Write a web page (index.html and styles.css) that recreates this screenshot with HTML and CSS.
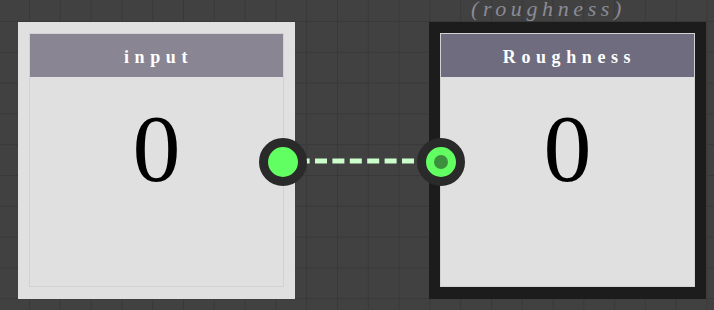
FILE: index.html
```html
<!DOCTYPE html>
<html lang="en">
<head>
  <meta charset="UTF-8">
  <meta name="viewport" content="width=device-width, initial-scale=1.0">
  <title>Node graph</title>
  <link rel="stylesheet" href="styles.css">
</head>
<body>

<div class="canvas">
  <!-- wire between the two ports -->
  <svg class="wire" width="714" height="310" viewBox="0 0 714 310">
    <line x1="280.2" y1="161" x2="440" y2="161"></line>
  </svg>

  <div class="node node-input">
    <div class="node-body">
      <div class="node-title">input</div>
      <div class="node-value">0</div>
      <span class="port port-out"></span>
    </div>
  </div>

  <div class="var-label">(roughness)</div>

  <div class="node node-selected">
    <div class="node-body">
      <div class="node-title title-dark">Roughness</div>
      <div class="node-value">0</div>
      <span class="port port-in"></span>
    </div>
  </div>
</div>

</body>
</html>
```

FILE: styles.css
```css
* {
  margin: 0;
  padding: 0;
  box-sizing: border-box;
}

body {
  background: #414141;
  overflow: hidden;
  width: 714px;
  height: 310px;
  font-family: 'Liberation Serif', 'Times New Roman', serif;
}

.canvas {
  position: relative;
  width: 714px;
  height: 310px;
  background-color: #414141;
  background-image:
    linear-gradient(to right, #393939 1px, transparent 1px),
    linear-gradient(to bottom, #393939 1px, transparent 1px);
  background-size: 30.8px 30.8px;
  background-position: 29px 21px;
}

.wire {
  position: absolute;
  top: 0;
  left: 0;
}

.wire line {
  stroke: #ccffcc;
  stroke-width: 5;
  stroke-dasharray: 12 5.4;
}

.node {
  position: absolute;
  top: 22px;
  width: 277px;
  height: 277px;
  padding: 11px 11px 12px;
  background: #e0e0e0;
}

.node-input {
  left: 18px;
}

.node-selected {
  left: 429px;
  background: #1c1c1c;
}

.node-body {
  position: relative;
  height: 100%;
  background: #e0e0e0;
  border: 1px solid #d2d2d2;
  display: flex;
  flex-direction: column;
}

.node-title {
  height: 43px;
  display: flex;
  align-items: center;
  justify-content: center;
  padding: 3px 0 0 4px;
  background: #898592;
  color: #fff;
  font-size: 18px;
  font-weight: bold;
  letter-spacing: 5.6px;
}

.title-dark {
  background: #6e6c7e;
}

.node-value {
  padding-top: 24px;
  text-align: center;
  font-size: 96px;
  line-height: 1;
  color: #000;
}

.port {
  position: absolute;
  top: 104px;
  width: 48px;
  height: 48px;
  border-radius: 50%;
  border: 9px solid #2a2a2a;
  background: #62ff62;
  z-index: 2;
}

.port-out {
  right: -24px;
}

.port-in {
  left: -24px;
}

.port-in::after {
  content: '';
  position: absolute;
  top: 8px;
  left: 8px;
  width: 14px;
  height: 14px;
  border-radius: 50%;
  background: #3c8f3c;
}

.var-label {
  position: absolute;
  top: -3px;
  left: 471px;
  color: #8b8b95;
  font-size: 22px;
  font-style: italic;
  letter-spacing: 4.6px;
  line-height: 24px;
}
```
